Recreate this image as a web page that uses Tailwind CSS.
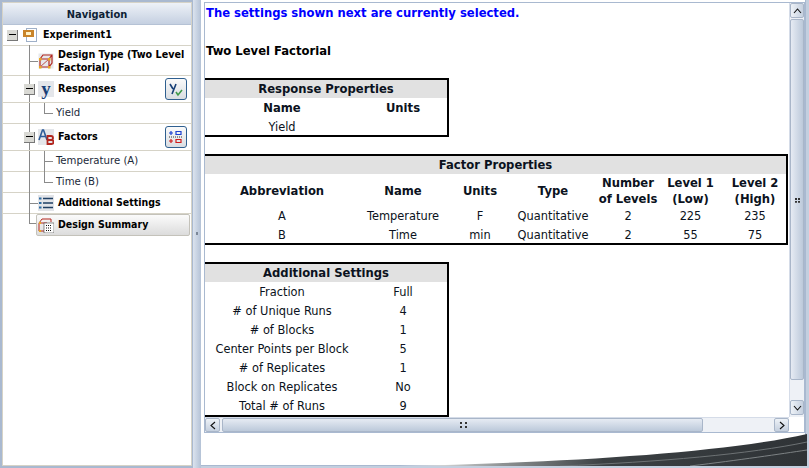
<!DOCTYPE html>
<html lang="en">
<head>
    <meta charset="UTF-8">
    <title>Design Summary</title>
    <script src="https://cdn.jsdelivr.net/npm/@tailwindcss/browser@4"></script>
</head>
<body class="overflow-hidden">
<div class="relative w-[809px] h-[468px] flex overflow-hidden bg-[#c3cfdf] font-['DejaVu_Sans',sans-serif] text-black">

    <!-- Navigation pane -->
    <aside class="w-[193px] h-[468px] pl-[2px] pt-[2px] shrink-0 bg-[#a9b9d0]">
        <div class="w-[190px] h-[464px] bg-white border border-[#d6d3c7] text-[11.3px] font-['DejaVu_Sans_Condensed','Noto_Sans',sans-serif]">
            <div class="h-[22px] pt-[3px] flex items-center justify-center font-bold text-[11px] text-[#0f1f35] bg-gradient-to-b from-[#eef2f8] to-[#c5d0e1] border-b border-[#b5c2d5]">Navigation</div>
            <div class="relative">
                <!-- tree lines -->
                <div class="absolute left-[26px] top-[20px] w-px h-[178px] bg-[#8a8a8a]"></div>
                <div class="absolute left-[26px] top-[36px] w-[9px] h-px bg-[#8a8a8a]"></div>
                <div class="absolute left-[26px] top-[178px] w-[9px] h-px bg-[#8a8a8a]"></div>
                <div class="absolute left-[26px] top-[198px] w-[9px] h-px bg-[#8a8a8a]"></div>
                <div class="absolute left-[41px] top-[77px] w-px h-[11px] bg-[#8a8a8a]"></div>
                <div class="absolute left-[41px] top-[88px] w-[9px] h-px bg-[#8a8a8a]"></div>
                <div class="absolute left-[41px] top-[125px] w-px h-[32px] bg-[#8a8a8a]"></div>
                <div class="absolute left-[41px] top-[136px] w-[9px] h-px bg-[#8a8a8a]"></div>
                <div class="absolute left-[41px] top-[157px] w-[9px] h-px bg-[#8a8a8a]"></div>

                <!-- Experiment1 -->
                <div class="h-[21px] pl-[4px] flex items-center border-b border-[#d6d3c7] font-bold text-[10.7px]">
                    <span class="w-[11px] h-[11px] flex items-center justify-center bg-[#d9d9d4] border-r border-b border-[#777]"><span class="w-[7px] h-px bg-black"></span></span>
                    <svg class="ml-[4px] w-[16px] h-[16px]" viewBox="0 0 16 16"><rect x="4.5" y="1.5" width="10" height="13" fill="#fff" stroke="#9fb0c8"/><rect x="1" y="3" width="11" height="7" fill="#c9842a"/><rect x="4" y="5" width="5" height="3" fill="#fff3c8"/></svg>
                    <span class="ml-[5px]">Experiment1</span>
                </div>
                <!-- Design Type -->
                <div class="h-[30px] pl-[35px] flex items-center border-b border-[#d6d3c7] font-bold text-[10.7px] leading-[13px]">
                    <svg class="w-[16px] h-[16px] shrink-0" viewBox="0 0 16 16"><rect x="0.5" y="0.5" width="15" height="15" fill="#e6e8ec"/><path d="M2 6h9v8H2zM2 6l3-4h9v8l-3 4M11 6l3-4" fill="none" stroke="#b3261e" stroke-width="1.2"/><path d="M2 14l9-8" stroke="#b3261e" stroke-width="0.8"/><rect x="1" y="5" width="2.5" height="2.5" fill="#e8a820"/><rect x="10" y="5" width="2.5" height="2.5" fill="#e8a820"/><rect x="1" y="13" width="2.5" height="2.5" fill="#e8a820"/><rect x="10" y="13" width="2.5" height="2.5" fill="#e8a820"/></svg>
                    <span class="ml-[4px]">Design Type (Two Level<br>Factorial)</span>
                </div>
                <!-- Responses -->
                <div class="relative h-[27px] pl-[21px] flex items-center border-b border-[#d6d3c7] font-bold text-[10.7px]">
                    <span class="relative w-[11px] h-[11px] flex items-center justify-center bg-[#d9d9d4] border-r border-b border-[#777]"><span class="w-[7px] h-px bg-black"></span></span>
                    <span class="ml-[3px] w-[16px] h-[16px] flex items-center justify-center bg-[#e4e6ea] font-['Liberation_Serif',serif] text-[19px] leading-[14px] text-[#173f77]">y</span>
                    <span class="ml-[4px]">Responses</span>
                    <span class="absolute left-[162px] top-[2px] w-[22px] h-[22px] flex items-center justify-center rounded-[3px] border border-[#2f5f8f] bg-gradient-to-b from-[#fafafa] to-[#d9dde2]">
                        <svg class="w-[16px] h-[16px]" viewBox="0 0 16 16"><path d="M2 3l3 5M8 3L4 13" fill="none" stroke="#173f77" stroke-width="1.6"/><path d="M8 11l2 3 4-5" fill="none" stroke="#3f9a4a" stroke-width="1.6"/></svg>
                    </span>
                </div>
                <div class="h-[21px] pl-[53px] flex items-center border-b border-[#d6d3c7] text-[#1c2a3a]">Yield</div>
                <!-- Factors -->
                <div class="relative h-[27px] pl-[21px] flex items-center border-b border-[#d6d3c7] font-bold text-[10.7px]">
                    <span class="relative w-[11px] h-[11px] flex items-center justify-center bg-[#d9d9d4] border-r border-b border-[#777]"><span class="w-[7px] h-px bg-black"></span></span>
                    <svg class="ml-[3px] w-[16px] h-[16px]" viewBox="0 0 16 16"><rect width="16" height="16" fill="#e4e6ea"/><path d="M1 11L4.5 1h1L9 11M2.5 7.5h5" fill="none" stroke="#2c5c9a" stroke-width="1.6"/><path d="M9.5 7h3.5a2 2 0 0 1 0 4h-3.5zM9.5 11h4a2 2 0 0 1 0 4h-4z" fill="none" stroke="#b3261e" stroke-width="1.8"/></svg>
                    <span class="ml-[4px]">Factors</span>
                    <span class="absolute left-[162px] top-[2px] w-[22px] h-[22px] flex items-center justify-center rounded-[3px] border border-[#2f5f8f] bg-gradient-to-b from-[#fafafa] to-[#d9dde2]">
                        <svg class="w-[16px] h-[16px]" viewBox="0 0 16 16"><path d="M1 4h4M3 2v4M8 2.5h5v3H8z" fill="none" stroke="#1b3fd0" stroke-width="1.2"/><path d="M1 8h14" stroke="#333" stroke-dasharray="1 1"/><path d="M1 12h4M3 10v4M8 10.5h5v3H8z" fill="none" stroke="#d01b1b" stroke-width="1.2"/></svg>
                    </span>
                </div>
                <div class="h-[21px] pl-[53px] flex items-center border-b border-[#d6d3c7] text-[#1c2a3a]">Temperature (A)</div>
                <div class="h-[21px] pl-[53px] flex items-center border-b border-[#d6d3c7] text-[#1c2a3a]">Time (B)</div>
                <!-- Additional Settings -->
                <div class="h-[21px] pl-[35px] flex items-center border-b border-[#d6d3c7] font-bold text-[10.5px]">
                    <svg class="w-[16px] h-[16px] shrink-0" viewBox="0 0 16 16"><rect width="16" height="16" fill="#e2e4e8"/><path d="M5 3.5h10M5 8h10M5 12.5h10" stroke="#1f3f63" stroke-width="1.4"/><path d="M1 2.5h2.5v2H1zM1 7h2.5v2H1zM1 11.5h2.5v2H1z" fill="#2c6aa0"/></svg>
                    <span class="ml-[4px]">Additional Settings</span>
                </div>
                <!-- Design Summary -->
                <div class="relative ml-[33px] w-[154px] h-[22px] pl-[1px] flex items-center font-bold text-[10.5px] border border-[#c4c2ba] rounded-[2px] bg-gradient-to-b from-[#fbfbfb] to-[#dcdcdc]">
                    <svg class="w-[16px] h-[16px] shrink-0" viewBox="0 0 16 16"><path d="M1 6h8v8H1zM1 6l3-4h9v3" fill="none" stroke="#b3261e"/><rect x="1" y="5" width="2" height="2" fill="#e8a820"/><rect x="1" y="13" width="2" height="2" fill="#e8a820"/><rect x="6" y="6" width="10" height="10" fill="#fff" stroke="#444" stroke-width="0.6"/><path d="M8 8.5h6M8 11h6M8 13.5h6" stroke="#111" stroke-dasharray="1 1" stroke-width="1.2"/></svg>
                    <span class="ml-[4px]">Design Summary</span>
                </div>
            </div>
        </div>
    </aside>

    <!-- Splitter -->
    <div class="relative w-[8px] h-[468px] shrink-0 bg-gradient-to-r from-[#dbe3ee] to-[#b4c2d6]">
        <span class="absolute left-[3px] top-[232px] w-[2px] h-[3px] bg-[#7b8798]"></span>
    </div>

    <!-- Main pane -->
    <main class="w-[605px] h-[466px] pt-[2px] pl-[3px] bg-white border-r border-b border-[#a9b9d0]">
        <div class="w-[601px] h-[431px] border-t border-l border-r border-b border-[#a9b9d0] flex flex-col">
            <div class="flex h-[414px]">
                <!-- Report content -->
                <div class="w-[585px] h-[414px] overflow-hidden text-[11.4px] leading-[19px] text-[#0b1220]">
                    <p class="mt-[1px] ml-[1px] h-[19px] font-bold text-[#0000ff] text-[11.6px]">The settings shown next are currently selected.</p>
                    <p class="mt-[19px] ml-[1px] h-[19px] font-bold text-[11.6px] text-black">Two Level Factorial</p>

                    <section class="mt-[17px] w-[244px] h-[59px] border-t-2 border-r-2 border-b-2 border-black">
                        <div class="h-[18px] bg-[#e1e1e1] text-center font-bold text-[11.6px] leading-[18px]">Response Properties</div>
                        <div class="grid grid-cols-[154px_88px] h-[19px] text-center font-bold text-[11.6px] leading-[20px]"><span>Name</span><span>Units</span></div>
                        <div class="grid grid-cols-[154px_88px] h-[19px] text-center leading-[20px]"><span>Yield</span><span></span></div>
                    </section>

                    <section class="mt-[17px] w-[583px] h-[91px] border-t-2 border-r-2 border-b-2 border-black">
                        <div class="h-[18px] bg-[#e1e1e1] text-center font-bold text-[11.6px] leading-[18px]">Factor Properties</div>
                        <div class="grid grid-cols-[154px_88px_66px_80px_70px_55px_68px] text-center font-bold text-[11.6px] items-center h-[33px] leading-[16px]">
                            <span>Abbreviation</span><span>Name</span><span>Units</span><span>Type</span><span>Number<br>of Levels</span><span>Level 1<br>(Low)</span><span class="pl-[6px]">Level 2<br>(High)</span>
                        </div>
                        <div class="grid grid-cols-[154px_88px_66px_80px_70px_55px_68px] text-center h-[19px]">
                            <span>A</span><span>Temperature</span><span>F</span><span>Quantitative</span><span>2</span><span>225</span><span class="pl-[6px]">235</span>
                        </div>
                        <div class="grid grid-cols-[154px_88px_66px_80px_70px_55px_68px] text-center h-[19px]">
                            <span>B</span><span>Time</span><span>min</span><span>Quantitative</span><span>2</span><span>55</span><span class="pl-[6px]">75</span>
                        </div>
                    </section>

                    <section class="mt-[17px] w-[244px] h-[155px] border-t-2 border-r-2 border-b-2 border-black">
                        <div class="h-[18px] bg-[#e1e1e1] text-center font-bold text-[11.6px] leading-[18px]">Additional Settings</div>
                        <div class="grid grid-cols-[154px_88px] h-[19px] text-center leading-[20px]"><span>Fraction</span><span>Full</span></div>
                        <div class="grid grid-cols-[154px_88px] h-[19px] text-center leading-[20px]"><span># of Unique Runs</span><span>4</span></div>
                        <div class="grid grid-cols-[154px_88px] h-[19px] text-center leading-[20px]"><span># of Blocks</span><span>1</span></div>
                        <div class="grid grid-cols-[154px_88px] h-[19px] text-center leading-[20px]"><span>Center Points per Block</span><span>5</span></div>
                        <div class="grid grid-cols-[154px_88px] h-[19px] text-center leading-[20px]"><span># of Replicates</span><span>1</span></div>
                        <div class="grid grid-cols-[154px_88px] h-[19px] text-center leading-[20px]"><span>Block on Replicates</span><span>No</span></div>
                        <div class="grid grid-cols-[154px_88px] h-[19px] text-center leading-[20px]"><span>Total # of Runs</span><span>9</span></div>
                    </section>
                </div>

                <!-- Vertical scrollbar -->
                <div class="w-[15px] h-[414px] flex flex-col bg-[#eef1f6] border-l border-[#d5dce8]">
                    <div class="h-[15px] flex items-center justify-center bg-gradient-to-r from-[#eef2f7] to-[#c5d0df] border border-[#a9b6c9] rounded-[2px]">
                        <svg class="w-[9px] h-[6px]" viewBox="0 0 9 6"><path d="M1 5l3.5-4L8 5" fill="none" stroke="#111" stroke-width="1.1"/></svg>
                    </div>
                    <div class="relative h-[361px] mt-[1px] bg-gradient-to-r from-[#e6ebf3] to-[#bcc9da] border border-[#a9b6c9] rounded-[2px]">
                        <span class="absolute left-[4px] top-[178px] w-[5px] h-[5px] border-x-2 border-dotted border-[#333]"></span>
                    </div>
                    <div class="h-[20px]"></div>
                    <div class="h-[15px] flex items-center justify-center bg-gradient-to-r from-[#eef2f7] to-[#c5d0df] border border-[#a9b6c9] rounded-[2px]">
                        <svg class="w-[9px] h-[6px]" viewBox="0 0 9 6"><path d="M1 1l3.5 4L8 1" fill="none" stroke="#111" stroke-width="1.1"/></svg>
                    </div>
                </div>
            </div>
            <!-- Horizontal scrollbar -->
            <div class="h-[15px] w-[584px] flex bg-[#eef1f6] border-t border-[#d5dce8]">
                <div class="w-[15px] flex items-center justify-center bg-gradient-to-b from-[#eef2f7] to-[#c5d0df] border border-[#a9b6c9] rounded-[2px]">
                    <svg class="w-[6px] h-[9px]" viewBox="0 0 6 9"><path d="M5 1L1 4.5 5 8" fill="none" stroke="#111" stroke-width="1.1"/></svg>
                </div>
                <div class="relative w-[481px] ml-[2px] bg-gradient-to-b from-[#e6ebf3] to-[#bcc9da] border border-[#a9b6c9] rounded-[2px]">
                    <span class="absolute left-[237px] top-[3px] w-[7px] h-[6px] border-x-2 border-dotted border-[#333]"></span>
                </div>
                <div class="w-[71px]"></div>
                <div class="w-[15px] flex items-center justify-center bg-gradient-to-b from-[#eef2f7] to-[#c5d0df] border border-[#a9b6c9] rounded-[2px]">
                    <svg class="w-[6px] h-[9px]" viewBox="0 0 6 9"><path d="M1 1l4 3.5L1 8" fill="none" stroke="#111" stroke-width="1.1"/></svg>
                </div>
            </div>
        </div>
    </main>

    <!-- Swoosh in the bottom corner -->
    <svg class="absolute left-[400px] top-[430px]" width="407" height="36" viewBox="0 0 407 36">
        <defs>
            <linearGradient id="swoosh" x1="0" x2="1" y1="0" y2="0">
                <stop offset="0" stop-color="#ffffff"/>
                <stop offset="0.25" stop-color="#8f9394"/>
                <stop offset="0.5" stop-color="#3b4043"/>
                <stop offset="1" stop-color="#2f3336"/>
            </linearGradient>
        </defs>
        <path d="M0 36C150 33 320 24 407 4V36Z" fill="url(#swoosh)"/>
        <path d="M160 36C260 32 350 24 407 12" fill="none" stroke="#6d7274" stroke-width="1"/>
        <path d="M290 36C340 30 380 24 407 20" fill="none" stroke="#7d8284" stroke-width="1"/>
    </svg>
</div>
</body>
</html>
